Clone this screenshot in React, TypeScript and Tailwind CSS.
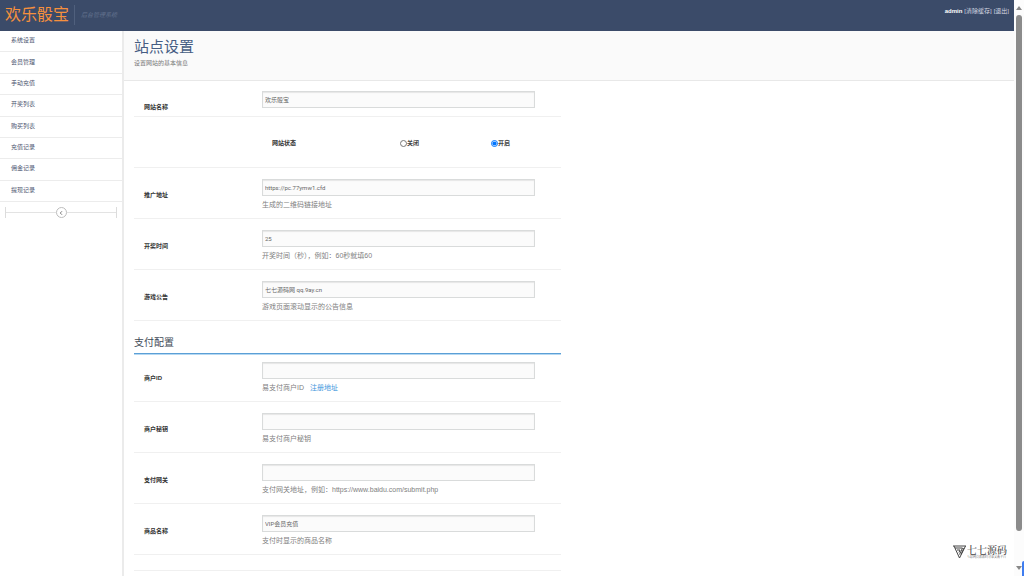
import type { ReactNode } from 'react';
import { ChevronLeft } from 'lucide-react';

type FieldProps = {
  readonly id: string;
  readonly label: string;
  readonly value?: string;
  readonly hint?: ReactNode;
  readonly className?: string;
};

const MENU = ['系统设置', '会员管理', '手动充值', '开奖列表', '购买列表', '充值记录', '佣金记录', '提现记录'];

function Field({ id, label, value = '', hint, className = 'pt-[11px] pb-2' }: FieldProps) {
  return (
    <div className={`flex border-b border-[#f0f0f0] ${className}`}>
      <label htmlFor={id} className="mt-[11px] w-[128px] shrink-0 pl-[10px] text-[6px] leading-[10px] font-bold text-[#333]">
        {label}
      </label>
      <div className="min-w-0">
        <input
          id={id}
          type="text"
          defaultValue={value}
          className="block h-[17px] w-[273px] border border-[#d9dbdb] bg-[#fbfbfb] px-[2px] font-['Roboto','Noto_Sans_CJK_SC',sans-serif] text-[6px] text-[#666] shadow-[inset_0_1px_1px_#e6e6e6]"
        />
        {hint && <p className="mt-1 text-[7px] leading-[10px] text-[#808080]">{hint}</p>}
      </div>
    </div>
  );
}

function StatusField() {
  return (
    <fieldset className="grid h-[51px] grid-cols-[266px_91px_1fr] items-center border-b border-[#f0f0f0] pt-[2px] text-[6px] leading-[10px] font-bold text-[#444]">
      <span id="status-label" className="pl-[138px] text-[#333]">网站状态</span>
      <label className="flex items-center">
        <input type="radio" name="status" aria-describedby="status-label" className="size-[7px]" />
        关闭
      </label>
      <label className="flex items-center">
        <input type="radio" name="status" aria-describedby="status-label" defaultChecked className="size-[7px]" />
        开启
      </label>
    </fieldset>
  );
}

function Header() {
  return (
    <header className="flex h-[31px] items-start justify-between bg-[#3b4b69]">
      <div className="flex pl-[5px]">
        <a href="#home" className="text-[16px] leading-[29px] text-[#f6903d]">欢乐骰宝</a>
        <span className="mt-[5px] ml-[5px] h-5 border-l border-[#50607d] pl-[6px] text-[6px] leading-5 text-[#64738f] italic">后台管理系统</span>
      </div>
      <div className="flex gap-[2px] pt-[6px] pr-[5px] text-[6px] leading-[10px] text-[#d5d9e1]">
        <b className="text-white">admin</b>
        <a href="#cache">[清除缓存]</a>
        <a href="#logout">[退出]</a>
      </div>
    </header>
  );
}

function Sidebar() {
  return (
    <aside className="w-[122px] shrink-0">
      <nav className="grid h-[171px] auto-rows-fr">
        {MENU.map((item) => (
          <a key={item} href={`#${item}`} className="flex items-center border-b border-[#ececec] pb-px pl-[11px] text-[6px] text-[#4c5570]">
            {item}
          </a>
        ))}
      </nav>
      <div className="mx-[5px] mt-[5px] flex h-[11px] items-center border-x border-[#dcdcdc]">
        <span className="h-px flex-1 bg-[#e3e3e3]" />
        <button type="button" aria-label="收起菜单" className="grid size-[11px] place-items-center rounded-full border border-[#bdbdbd] bg-white text-[#555]">
          <ChevronLeft className="size-[6px]" strokeWidth={3} />
        </button>
        <span className="h-px flex-1 bg-[#e3e3e3]" />
      </div>
    </aside>
  );
}

function Watermark() {
  return (
    <div className="absolute right-[17px] bottom-[17px] flex gap-px text-[#444]">
      <svg viewBox="0 0 26 28" className="h-[14px] w-[13px]" fill="none" stroke="currentColor" strokeWidth="2">
        <path d="M0 2h26M2 2l11 24L25 2M4 6h15l-6 13M8 10h6l-2 5M22 6l-6 13" />
      </svg>
      <div className="font-['Noto_Serif_CJK_SC','Noto_Sans_CJK_SC',serif]">
        <p className="text-[10px] leading-[9px] font-medium">七七源码</p>
        <p className="mt-px text-[3px] leading-1">互联网资源源码分享交流平台</p>
      </div>
    </div>
  );
}

function Scrollbar() {
  return (
    <div aria-hidden="true" className="flex w-[10px] shrink-0 flex-col items-center bg-[#fcfcfc] pt-[6px] pb-[6px]">
      <svg viewBox="0 0 6 4" className="h-1 w-[6px] fill-[#888]"><path d="M3 0 6 4H0z" /></svg>
      <div className="mt-[5px] mb-[35px] w-[6px] flex-1 rounded-full bg-[#8b8b8b]" />
      <svg viewBox="0 0 6 4" className="h-1 w-[6px] fill-[#888]"><path d="M3 4 6 0H0z" /></svg>
    </div>
  );
}

export default function App() {
  return (
    <div className="relative flex h-screen overflow-hidden bg-white font-['Liberation_Sans','Noto_Sans_CJK_SC',sans-serif]">
      <div className="flex min-w-0 flex-1 flex-col">
        <Header />
        <div className="flex min-h-0 flex-1">
          <Sidebar />
          <main className="min-w-0 flex-1 overflow-hidden border-l-2 border-[#ebebeb]">
            <div className="h-[50px] border-b border-[#e8e8e8] bg-[#fafafa] pt-[6px] pl-[10px]">
              <h1 className="text-[15px] leading-5 text-[#465d83]">站点设置</h1>
              <p className="mt-px text-[6px] leading-[10px] text-[#777]">设置网站的基本信息</p>
            </div>
            <form className="ml-[10px] w-full max-w-[427px]">
              <Field id="site-name" label="网站名称" value="欢乐骰宝" className="pt-[10px] pb-1" />
              <StatusField />
              <Field id="site-url" label="推广地址" value="https://pc.77ymw1.cfd" hint="生成的二维码链接地址" />
              <Field id="draw-time" label="开奖时间" value="25" hint="开奖时间（秒），例如：60秒就填60" />
              <Field id="notice" label="游戏公告" value="七七源码网 qq.9ay.cn" hint="游戏页面滚动显示的公告信息" />
              <h2 className="h-[33px] border-b border-[#5b9fd6] pt-[15px] text-[10px] leading-[14px] text-[#3f4b57] shadow-[0_1px_0_#b5d8f2]">支付配置</h2>
              <Field
                id="merchant-id"
                label="商户ID"
                className="pt-2 pb-2"
                hint={<>易支付商户ID <a href="#register" className="ml-1 text-[#3d95dc]">注册地址</a></>}
              />
              <Field id="merchant-key" label="商户秘钥" hint="易支付商户秘钥" />
              <Field id="gateway" label="支付网关" hint="支付网关地址，例如：https://www.baidu.com/submit.php" />
              <Field id="goods-name" label="商品名称" value="VIP会员充值" hint="支付时显示的商品名称" />
              <div className="h-4 border-b border-[#f0f0f0]" />
            </form>
          </main>
        </div>
      </div>
      <Scrollbar />
      <Watermark />
      <span className="absolute right-0 bottom-0 h-[15px] w-[2px] rounded-tl-[2px] bg-[#3f7df0]" />
    </div>
  );
}
